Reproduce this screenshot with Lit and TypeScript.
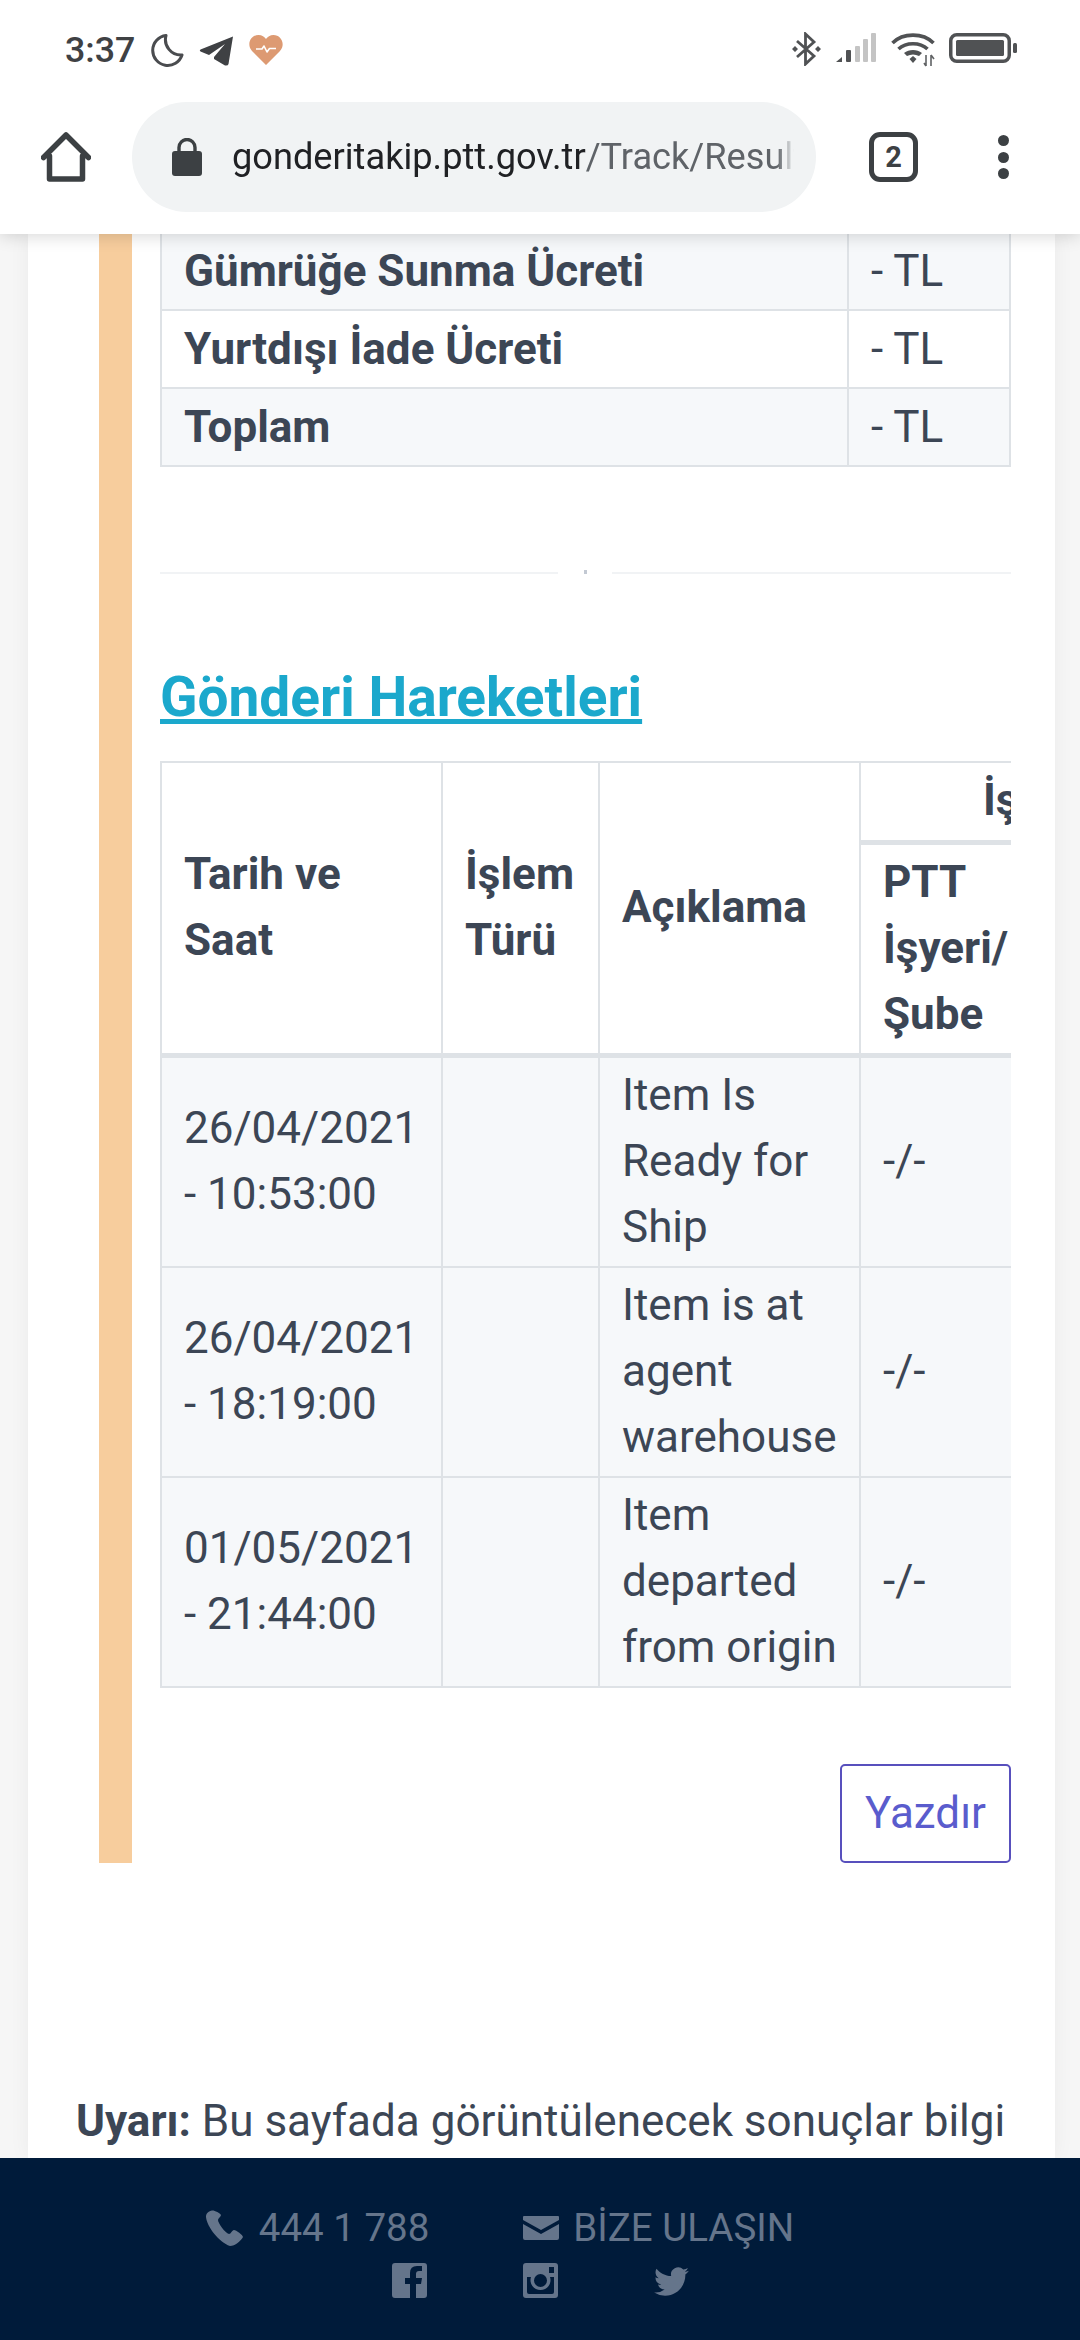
import { LitElement, html, css } from "lit";
import { customElement } from "lit/decorators.js";

const rows = [
  { date: "26/04/2021", time: "- 10:53:00", text: ["Item Is", "Ready for", "Ship"] },
  { date: "26/04/2021", time: "- 18:19:00", text: ["Item is at", "agent", "warehouse"] },
  { date: "01/05/2021", time: "- 21:44:00", text: ["Item", "departed", "from origin"] },
];

@customElement("app-root")
export class AppRoot extends LitElement {
  static styles = css`
    :host { display: flex; flex-direction: column; width: 1080px; height: 2340px; overflow: hidden; font-family: Roboto, sans-serif; background: #fff; color: #3c4655; }
    * { box-sizing: border-box; }
    svg { display: block; flex: none; }

    .chrome { height: 234px; flex: none; background: #fff; box-shadow: 0 2px 16px rgba(0,0,0,.16); position: relative; z-index: 2; display: flex; flex-direction: column; }
    .status { height: 102px; display: flex; align-items: flex-start; padding: 33px 0 0 65px; }
    .time { font-size: 35.75px; font-weight: 500; line-height: 34px; color: #3f4144; width: 71px; white-space: nowrap; }
    .s-left { display: flex; align-items: flex-start; gap: 15px; flex: 1; }
    .s-right { display: flex; align-items: flex-start; gap: 14px; padding-right: 63px; }
    .toolbar { height: 132px; display: flex; align-items: flex-start; padding-left: 41px; }
    .pill { margin-left: 41px; width: 684px; height: 110px; border-radius: 55px; background: #f1f3f4; display: flex; align-items: center; padding: 0 22px 0 40px; }
    .url { margin-left: 30px; font-size: 36.2px; line-height: 44px; white-space: nowrap; overflow: hidden; flex: 1; color: #202124; -webkit-mask-image: linear-gradient(to right, #000 97%, transparent); mask-image: linear-gradient(to right, #000 97%, transparent); }
    .url span { color: #5f6368; }
    .tabs { margin: 30px 0 0 53px; width: 49px; height: 50px; border: 5px solid #3c4043; border-radius: 11px; display: flex; align-items: center; justify-content: center; font-size: 29px; font-weight: 700; color: #3c4043; }
    .dots { margin: 33px 0 0 80px; display: flex; flex-direction: column; gap: 5.5px; }
    .dots i { width: 11px; height: 11px; border-radius: 50%; background: #3c4043; }

    main { flex: 1; min-height: 0; overflow: hidden; background: #f6f6f6; padding: 0 25px 0 28px; }
    .card { background: #fff; height: 100%; overflow: hidden; box-shadow: 0 0 20px rgba(0,0,0,.05); padding-top: 0; }
    .accent { margin: -3px 0 0 71px; border-left: 33px solid #f7cd9d; padding: 0 44px 0 28px; }

    table { border-collapse: collapse; table-layout: fixed; font-size: 44px; line-height: 66px; }
    th, td { border: 2px solid #dee2e6; padding: 5px 22px; text-align: left; vertical-align: middle; font-weight: 400; }
    th { font-weight: 700; }
    .fees { width: 851px; }
    .fees tr:nth-child(odd), .moves tbody tr { background: #f6f8fa; }
    .fees .c1 { width: 687px; font-weight: 700; }

    .divider { margin-top: 104px; height: 4px; display: flex; align-items: center; }
    .divider::before, .divider::after { content: ""; height: 2px; background: #f1f3f5; }
    .divider::before { width: 398px; }
    .divider::after { width: 399px; }
    .divider b { width: 54px; display: flex; justify-content: center; }
    .divider b i { width: 3px; height: 4px; background: #c3c9d3; margin-top: -3px; }

    h2 { margin: 89px 0 0; font-size: 55px; line-height: 66px; font-weight: 700; color: #1ba8cc; text-decoration: underline; text-decoration-thickness: 5px; text-underline-offset: 3px; }

    .clip { margin-top: 31px; width: 851px; overflow: hidden; }
    .moves { width: 1300px; }
    .moves th, .moves td { padding-top: 4px; padding-bottom: 6px; }
    .moves thead th { border-bottom-width: 5px; }
    .moves thead tr:first-child th.over { border-bottom-width: 5px; height: 80px; padding-left: 122px; white-space: nowrap; }
    .moves thead tr:last-child th { height: 212px; }
    .moves tbody td { height: 210px; }

    .actions { margin-top: 76px; display: flex; justify-content: flex-end; }
    .print { width: 171px; height: 99px; border: 2px solid #5850bd; border-radius: 5px; background: #fff; color: #5a5ccd; font: 400 44px/66px Roboto, sans-serif; display: flex; align-items: center; justify-content: center; }

    .warn { margin: 225px 0 0 48px; font-size: 44px; line-height: 66px; white-space: nowrap; }
    .warn b { font-weight: 700; }

    footer { height: 182px; flex: none; background: #001b3a; color: #65758b; display: flex; flex-direction: column; align-items: center; padding-top: 47px; font-size: 38.5px; position: relative; z-index: 1; }
    .contact { display: flex; align-items: center; height: 46px; margin-left: -81px; white-space: nowrap; }
    .contact span { line-height: 46px; }
    .phone { margin-right: 16px; }
    .mail { margin: 0 14px 0 94px; }
    .social { display: flex; gap: 96px; margin: 12px 0 0; }
  `;

  render() {
    return html`
      <div class="chrome">
        <div class="status">
          <div class="s-left">
            <div class="time">3:37</div>
            <svg width="33" height="34" viewBox="0 0 33 34"><path d="M15 2.5 A15 15 0 1 0 31 22 A15.5 15.5 0 0 1 15 2.5 Z" fill="none" stroke="#4a4c4f" stroke-width="3" stroke-linejoin="round"/></svg>
            <svg width="35" height="30" viewBox="0 0 35 30" style="margin-top:3px"><path d="M34 0.5 L1.5 13.5 Q0 14.5 1.5 15.5 L10 19 L26 8 L15 21 L15 23 L26 29.5 Q29 30 29.5 28 Z" fill="#3f4144"/></svg>
            <svg width="34" height="30" viewBox="0 0 34 30" style="margin-top:2px"><path d="M17 30 L3 16 C-3 9 2 0 9.5 0 C13 0 15.5 2 17 4 C18.5 2 21 0 24.5 0 C32 0 37 9 31 16 Z" fill="#dd9a72"/><path d="M7 14 H13 L15 11 L18 17 L20.5 13.5 H27" fill="none" stroke="#fff" stroke-width="1.6" stroke-linejoin="round"/></svg>
          </div>
          <div class="s-right">
            <svg width="29" height="34" viewBox="0 0 29 34" style="margin-top:-1px"><path d="M5 9 L22 24 L13.5 32 V2 L22 10 L5 25" fill="none" stroke="#505254" stroke-width="2.8" stroke-linejoin="miter"/><path d="M0 17 L3 14 L6 17 L3 20 Z M23 17 L26 14 L29 17 L26 20 Z" fill="#505254"/></svg>
            <svg width="41" height="30" viewBox="0 0 41 30"><path d="M1 29 L7 24 V29 Z" fill="#505254"/><rect x="11" y="17" width="5" height="12" rx="1" fill="#505254"/><rect x="20" y="13" width="5" height="16" rx="1" fill="#c4c4c4"/><rect x="28" y="6" width="5" height="23" rx="1" fill="#c4c4c4"/><rect x="36" y="0" width="5" height="29" rx="1" fill="#c4c4c4"/></svg>
            <svg width="44" height="34" viewBox="0 0 44 34" style="margin-left:1px"><g fill="none" stroke="#505254" stroke-width="3.6"><path d="M1.5 10 C12 -0.5 32 -0.5 42.5 10"/><path d="M7.5 16 C15 9 29 9 36.5 16"/></g><path d="M13 20 C18 16 26 16 31 20 L28 23 C24 21 20 21 16 23 Z" fill="#505254"/><path d="M18.5 26 L22 23 L25.5 26 L22 30 Z" fill="#505254"/><path d="M35 22 V33 M33 30 L35 33 M40 22 V33 M40 22 L43 26" stroke="#606264" stroke-width="1.6" fill="none"/></svg>
            <svg width="68" height="30" viewBox="0 0 68 30"><rect x="1.75" y="1.75" width="58.5" height="26.5" rx="6" fill="none" stroke="#505254" stroke-width="3.5"/><rect x="7" y="7" width="48" height="16" rx="1.5" fill="#505254"/><rect x="64" y="10" width="4" height="10" rx="1.5" fill="#505254"/></svg>
          </div>
        </div>
        <div class="toolbar">
          <svg width="50" height="50" viewBox="0 0 50 50" style="margin-top:30px"><path d="M2.5 25.5 L25 3 L47.5 25.5 M8.5 24 V47 H41.5 V24" fill="none" stroke="#3c4043" stroke-width="5.5" stroke-linejoin="round" stroke-linecap="round"/></svg>
          <div class="pill">
            <svg width="30" height="38" viewBox="0 0 30 38"><rect y="13" width="30" height="25" rx="3" fill="#3c4043"/><path d="M7 14 V9.5 A8 8 0 0 1 23 9.5 V14" fill="none" stroke="#3c4043" stroke-width="3.4"/></svg>
            <div class="url">gonderitakip.ptt.gov.tr<span>/Track/Result</span></div>
          </div>
          <div class="tabs">2</div>
          <div class="dots"><i></i><i></i><i></i></div>
        </div>
      </div>

      <main>
        <div class="card">
          <div class="accent">
            <table class="fees">
              <tr><td class="c1">Gümrüğe Sunma Ücreti</td><td>- TL</td></tr>
              <tr><td class="c1">Yurtdışı İade Ücreti</td><td>- TL</td></tr>
              <tr><td class="c1">Toplam</td><td>- TL</td></tr>
            </table>
            <div class="divider"><b><i></i></b></div>
            <h2>Gönderi Hareketleri</h2>
            <div class="clip">
              <table class="moves">
                <colgroup><col style="width:281px"><col style="width:157px"><col style="width:261px"><col style="width:300px"><col style="width:301px"></colgroup>
                <thead>
                  <tr>
                    <th rowspan="2">Tarih ve<br>Saat</th>
                    <th rowspan="2">İşlem<br>Türü</th>
                    <th rowspan="2">Açıklama</th>
                    <th colspan="2" class="over">İşlem Yapılan Yer</th>
                  </tr>
                  <tr><th>PTT<br>İşyeri/<br>Şube</th><th></th></tr>
                </thead>
                <tbody>
                  ${rows.map(r => html`<tr>
                    <td>${r.date}<br>${r.time}</td>
                    <td></td>
                    <td>${r.text[0]}<br>${r.text[1]}<br>${r.text[2]}</td>
                    <td>-/-</td>
                    <td></td>
                  </tr>`)}
                </tbody>
              </table>
            </div>
            <div class="actions"><button class="print">Yazdır</button></div>
          </div>
          <p class="warn"><b>Uyarı:</b> Bu sayfada görüntülenecek sonuçlar bilgi</p>
        </div>
      </main>

      <footer>
        <div class="contact">
          <svg class="phone" width="38" height="38" viewBox="0 0 38 38"><path d="M7 1.5 C4 2 1 4 1 8 C2 18 14 33 25 37 C30 37 36 32 38 28 C38 26 31 21 29 21 C27 21 26 25 24 25 C20 24 13 14 13 11 C13 9 16 8 16 6 C15 4 9 1 7 1.5 Z" fill="#65758b"/></svg>
          <span>444 1 788</span>
          <svg class="mail" width="36" height="24" viewBox="0 0 36 24"><path d="M1 0 H35 Q36 0 36 1 V4 L18 14 L0 4 V1 Q0 0 1 0 Z M0 8 L18 18 L36 8 V22 Q36 24 34 24 H2 Q0 24 0 22 Z" fill="#65758b"/></svg>
          <span>BİZE ULAŞIN</span>
        </div>
        <div class="social">
          <svg width="35" height="35" viewBox="0 0 35 35"><path fill-rule="evenodd" d="M3 0 H32 Q35 0 35 3 V32 Q35 35 32 35 H24 V21 H29 L30 15 H24 V11 Q24 8 27 8 H30 V3 H25 Q18 3 18 10 V15 H13 V21 H18 V35 H3 Q0 35 0 32 V3 Q0 0 3 0 Z" fill="#65758b"/></svg>
          <svg width="35" height="35" viewBox="0 0 35 35"><path fill-rule="evenodd" d="M3 0 H32 Q35 0 35 3 V32 Q35 35 32 35 H3 Q0 35 0 32 V3 Q0 0 3 0 Z M26 4 V10 H31 V4 Z M4 14 V29 Q4 31 6 31 H29 Q31 31 31 29 V14 H27 A10 10 0 1 1 8 14 Z M17.5 11 A6.5 6.5 0 1 0 17.5 24 A6.5 6.5 0 1 0 17.5 11 Z" fill="#65758b"/></svg>
          <svg width="35" height="29" viewBox="0 0 24 20" style="margin-top:4px"><path d="M23.953 2.57a10 10 0 01-2.825.775 4.958 4.958 0 002.163-2.723c-.951.555-2.005.959-3.127 1.184a4.92 4.92 0 00-8.384 4.482C7.69 6.095 4.067 4.13 1.64 1.162a4.822 4.822 0 00-.666 2.475c0 1.71.87 3.213 2.188 4.096a4.904 4.904 0 01-2.228-.616v.06a4.923 4.923 0 003.946 4.827 4.996 4.996 0 01-2.212.085 4.936 4.936 0 004.604 3.417 9.867 9.867 0 01-6.102 2.105c-.39 0-.779-.023-1.17-.067a13.995 13.995 0 007.557 2.209c9.053 0 13.998-7.496 13.998-13.985 0-.21 0-.42-.015-.63A9.935 9.935 0 0024 2.59z" fill="#65758b"/></svg>
        </div>
      </footer>
    `;
  }
}
